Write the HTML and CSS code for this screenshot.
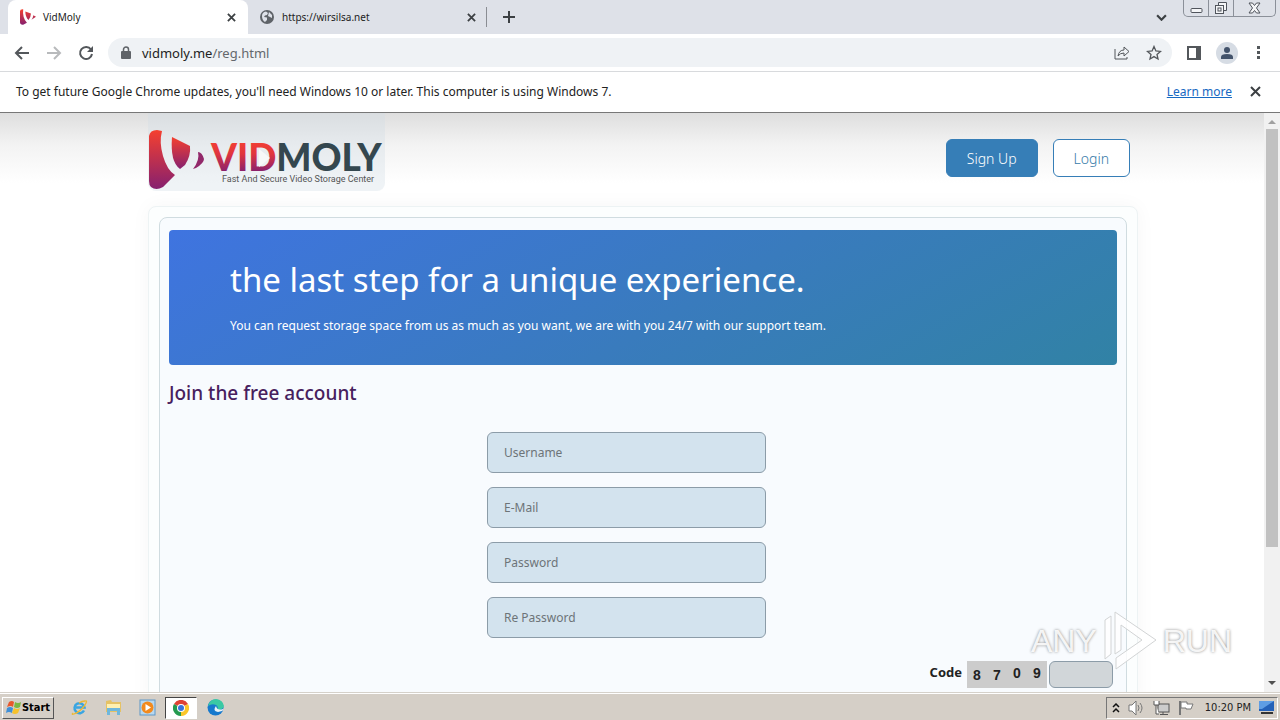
FILE: index.html
```html
<!DOCTYPE html>
<html lang="en">
<head>
  <meta charset="UTF-8" />
  <title>VidMoly</title>
  <meta name="viewport" content="width=device-width, initial-scale=1" />
  <link rel="stylesheet" href="styles.css">
</head>
<body>
  <!-- Tabs -->
  <div class="tab-strip">
    <div class="tab active">
      <svg class="favicon" viewBox="0 0 60 60">
        <defs>
          <linearGradient id="mark" x1="0" y1="0" x2="0" y2="1">
            <stop offset="0" stop-color="#f5402f" />
            <stop offset="1" stop-color="#86206f" />
          </linearGradient>
        </defs>
        <path fill="url(#mark)" d="M0 8Q0 0 12 1Q8 32 26 52L12 59Q0 60 0 50ZM20 9L41 17Q41 30 32 41Q20 30 20 9ZM50 23L60 29L43 40Q49 32 50 23Z" />
      </svg>
      <span class="tab-title">VidMoly</span>
      <button class="tab-close" aria-label="Close tab"><svg viewBox="0 0 10 10"><path d="M1 1L9 9M9 1L1 9" /></svg></button>
    </div>
    <div class="tab">
      <svg class="favicon" viewBox="0 0 16 16">
        <circle cx="8" cy="8" r="7" fill="#5f6368" />
        <path fill="#dee1e8" d="M3 7Q3 3 7 2.500L9 4L8 6L6 6.500L5 8L8 8.500L8 11L6 13Q3 11 3 7ZM10 3L13 6L13 9L11 8L9 7Z" />
      </svg>
      <span class="tab-title">https://wirsilsa.net</span>
      <button class="tab-close" aria-label="Close tab"><svg viewBox="0 0 10 10"><path d="M1 1L9 9M9 1L1 9" /></svg></button>
    </div>
    <button class="new-tab" aria-label="New tab"><svg viewBox="0 0 12 12"><path d="M6 0V12M0 6H12" /></svg></button>
    <button class="tab-search" aria-label="Search tabs"><svg viewBox="0 0 10 6"><path d="M1 1L5 5L9 1" /></svg></button>
    <div class="window-buttons">
      <button aria-label="Minimize"><svg width="13" height="12" viewBox="0 0 13 12"><rect x="1" y="6.500" width="11" height="4" rx="1" /></svg></button>
      <button aria-label="Restore"><svg width="14" height="14" viewBox="0 0 14 14"><path d="M4.500 4V1.500H12.500V9.500H10" /><rect x="1.500" y="4.500" width="8" height="8" /><rect x="4" y="7" width="3" height="3" /></svg></button>
      <button class="wide" aria-label="Close"><svg width="13" height="12" viewBox="0 0 13 12"><path d="M1 1H4.500L6.500 3.500L8.500 1H12L8.500 6L12 11H8.500L6.500 8.500L4.500 11H1L4.500 6Z" /></svg></button>
    </div>
  </div>

  <!-- Toolbar -->
  <div class="toolbar">
    <button aria-label="Back"><svg width="16" height="16" viewBox="0 0 16 16"><path d="M15 8H2M8 2L2 8L8 14" /></svg></button>
    <button class="disabled" aria-label="Forward"><svg width="16" height="16" viewBox="0 0 16 16"><path d="M1 8H14M8 2L14 8L8 14" /></svg></button>
    <button aria-label="Reload"><svg width="16" height="16" viewBox="0 0 16 16"><path d="M13 4.500A6 6 0 1 0 14 9" /><path class="solid" d="M15 1V7H9Z" /></svg></button>
    <div class="address-bar">
      <svg class="lock" width="10" height="13" viewBox="0 0 10 13"><rect x="0" y="5" width="10" height="8" rx="1" fill="#5f6368" /><path d="M2.500 6V3.500A2.500 2.500 0 0 1 7.500 3.500V6" fill="none" stroke="#5f6368" stroke-width="1.500" /></svg>
      <span class="url">vidmoly.me<span>/reg.html</span></span>
      <button aria-label="Share"><svg class="thin" width="16" height="16" viewBox="0 0 16 16"><path d="M1 4V14H13V12M4 11Q5 5 10 5V2L15 6.500L10 11V8Q6 8 4 11Z" /></svg></button>
      <button aria-label="Bookmark"><svg class="star" width="16" height="16" viewBox="0 0 16 16"><path d="M8 1.500L9.900 6L14.500 6.400L11 9.500L12 14L8 11.600L4 14L5 9.500L1.500 6.400L6.100 6Z" /></svg></button>
    </div>
    <button class="side" aria-label="Side panel"><svg width="14" height="14" viewBox="0 0 14 14"><rect x="1" y="1" width="12" height="12" /><path class="solid" d="M9 0H14V14H9Z" /></svg></button>
    <button class="avatar" aria-label="Profile"><svg width="22" height="22" viewBox="0 0 22 22"><circle cx="11" cy="11" r="11" fill="#d6dce4" /><circle cx="11" cy="8" r="3" fill="#43536b" /><path d="M5 17V15Q5 12 11 12Q17 12 17 15V17Z" fill="#43536b" /></svg></button>
    <button class="menu" aria-label="Menu"><svg width="4" height="14" viewBox="0 0 4 14"><path class="solid" d="M0 0H3V3H0ZM0 5H3V8H0ZM0 10H3V13H0Z" /></svg></button>
  </div>

  <!-- Info bar -->
  <div class="info-bar">
    <p>To get future Google Chrome updates, you'll need Windows 10 or later. This computer is using Windows 7.</p>
    <a href="#">Learn more</a>
    <button aria-label="Dismiss"><svg width="11" height="11" viewBox="0 0 11 11"><path d="M1 1L10 10M10 1L1 10" /></svg></button>
  </div>

  <!-- Page -->
  <div class="viewport">
    <div class="page">
      <div class="container">
        <header class="site-header">
          <a class="logo" href="#" aria-label="VidMoly">
            <svg width="237" height="78" viewBox="0 0 237 78">
              <defs>
                <linearGradient id="vid" gradientUnits="userSpaceOnUse" x1="0" y1="29" x2="0" y2="59">
                  <stop offset="0" stop-color="#f23f33" />
                  <stop offset="0.400" stop-color="#e0353f" />
                  <stop offset="1" stop-color="#86206f" />
                </linearGradient>
              </defs>
              <path fill="url(#mark)" d="M1 23Q2 17 9 17L14 18Q11 29 15 43Q19 57 27 62L15 74Q8 78 3 74Q1 72 1 68Z" />
              <path fill="url(#mark)" d="M24 24L42 33Q43 43 37 52L32 56Q22 49 24 24Z" />
              <path fill="#92286a" d="M50 39Q54 39 56 46Q56 50 48 55L45 56Q52 47 50 39Z" />
              <text class="logo-name" x="63" y="58"><tspan fill="url(#vid)">VID</tspan><tspan fill="#34474f">MOLY</tspan></text>
              <path d="M111 36L122 45L111 54Z" fill="#f7f8f8" />
              <text class="logo-tagline" x="74" y="69">Fast And Secure Video Storage Center</text>
            </svg>
          </a>
          <nav>
            <button class="btn btn-primary">Sign Up</button>
            <button class="btn btn-outline">Login</button>
          </nav>
        </header>

        <main class="panel">
          <div class="panel-inner">
            <section class="banner">
              <h1>the last step for a unique experience.</h1>
              <p>You can request storage space from us as much as you want, we are with you 24/7 with our support team.</p>
            </section>
            <h2>Join the free account</h2>
            <form>
              <div class="fields">
                <input type="text" placeholder="Username" aria-label="Username" />
                <input type="email" placeholder="E-Mail" aria-label="E-Mail" />
                <input type="password" placeholder="Password" aria-label="Password" />
                <input type="password" placeholder="Re Password" aria-label="Re Password" />
              </div>
              <div class="captcha">
                <label for="code">Code</label>
                <div class="digits"><span class="low">8</span><span class="low">7</span><span>0</span><span>9</span></div>
                <input type="text" id="code" />
              </div>
            </form>
          </div>
        </main>
      </div>
    </div>
    <div class="scrollbar">
      <svg width="8" height="4" viewBox="0 0 8 4"><path d="M0 4L4 0L8 4Z" fill="#a0a0a0" /></svg>
      <div class="thumb"></div>
      <svg width="8" height="4" viewBox="0 0 8 4"><path d="M0 0L4 4L8 0Z" fill="#505050" /></svg>
    </div>
    <div class="watermark">
      <span>ANY</span>
      <svg width="58" height="64" viewBox="0 0 58 64">
        <path d="M4 50V11L10 7V45ZM14 3L55 31L15 60V49L41 31L20 16V41L14 45Z" fill="#fff" fill-opacity="0.800" stroke="#d2d4d5" />
      </svg>
      <span>RUN</span>
    </div>
  </div>

  <!-- Taskbar -->
  <div class="taskbar">
    <button class="start">
      <svg width="16" height="16" viewBox="0 0 16 16"><path d="M3 2Q6 0 8 2L7 7Q5 5 1 7Z" fill="#e8582c" /><path d="M9 2Q12 4 15 2L14 7Q11 9 8 7Z" fill="#7ab842" /><path d="M1 8Q4 6 7 8L6 13Q3 11 0 13Z" fill="#3e8fd8" /><path d="M8 8Q11 10 14 8L12 13Q9 15 6 13Z" fill="#f6c22c" /></svg>
      Start
    </button>
    <button class="task" aria-label="Internet Explorer"><svg width="17" height="17" viewBox="0 0 17 17"><path d="M13 11.500A5 5 0 1 1 13.500 8.500H5" fill="none" stroke="#38a5e2" stroke-width="2.500" /><path d="M2 14Q0 16 3 15Q9 13 14 6Q17 1 14 2Q11 2 8 4" fill="none" stroke="#edb934" stroke-width="1.300" /></svg></button>
    <button class="task" aria-label="Explorer"><svg width="17" height="17" viewBox="0 0 17 17"><path d="M1 2L6 1L7 3H16V13H1Z" fill="#e5c265" /><path d="M2 5H15V9H2Z" fill="#fff0b0" /><path d="M2 16V9H15V16H12V12H5V16Z" fill="#6fb7dc" /></svg></button>
    <button class="task" aria-label="Media Player"><svg width="17" height="17" viewBox="0 0 17 17"><rect x="1" y="1" width="15" height="15" fill="#b8d8ef" stroke="#5e98c8" /><circle cx="8.500" cy="8.500" r="6" fill="#f28a1e" /><path d="M6.500 5L12 8.500L6.500 12Z" fill="#fff" /></svg></button>
    <button class="task current" aria-label="Chrome"><svg width="16" height="16" viewBox="0 0 16 16"><path d="M8 8L1 4A8 8 0 0 1 15 4Z" fill="#df4234" /><path d="M8 8L15 4A8 8 0 0 1 8 16Z" fill="#fbc629" /><path d="M8 8L8 16A8 8 0 0 1 1 4Z" fill="#249a50" /><circle cx="8" cy="8" r="4" fill="#fff" /><circle cx="8" cy="8" r="3" fill="#3973dc" /></svg></button>
    <button class="task" aria-label="Edge"><svg width="17" height="17" viewBox="0 0 17 17"><circle cx="8.500" cy="8.500" r="8" fill="#1679cd" /><path d="M1 7Q3 0 9 0Q16 1 17 7Q16 11 10 11Q12 8 9 6Q5 4 1 7Z" fill="#3ac9a4" /><path d="M9 7Q5 12 11 13L15 12Q17 11 16 10Q10 12 9 7Z" fill="#eaf4f8" /></svg></button>
    <div class="tray">
      <svg width="8" height="10" viewBox="0 0 8 10"><path d="M1 4L4 1L7 4M1 9L4 6L7 9" fill="none" stroke="#111" stroke-width="1.500" /></svg>
      <svg width="17" height="16" viewBox="0 0 17 16"><path d="M1 5H4L8 1V15L4 11H1Z" fill="#fff" stroke="#777" /><path d="M10 5Q12 8 10 11M12 3Q16 8 12 13" fill="none" stroke="#777" /></svg>
      <svg width="17" height="16" viewBox="0 0 17 16"><rect x="5" y="4" width="11" height="8" fill="#ccc" stroke="#555" /><path d="M7 14.500H15M10 12V14" stroke="#555" fill="none" /><path d="M1 1V5H6V1M3 5V14H6" fill="#fff" stroke="#555" /></svg>
      <svg width="17" height="16" viewBox="0 0 17 16"><path d="M2 1V15" stroke="#777" stroke-width="2" /><path d="M3 2H9V4H15L13 9H8V8H3Z" fill="#fff" stroke="#777" /></svg>
      <time>10:20 PM</time>
      <svg width="16" height="13" viewBox="0 0 16 13"><rect x="0" y="0" width="15" height="10" fill="#2461b8" /><path d="M0 0H15L3 8H0Z" fill="#5e9de4" /><path d="M2 12H14" stroke="#333" stroke-width="2" /></svg>
    </div>
  </div>
</body>
</html>
```

FILE: styles.css
```css
* {
  box-sizing: border-box;
}

body {
  display: flex;
  flex-direction: column;
  height: 100vh;
  margin: 0;
  overflow: hidden;
  font-family: "Noto Sans", sans-serif;
  font-size: 12px;
  color: #222;
  background: #fff;
}

button {
  display: flex;
  align-items: center;
  justify-content: center;
  padding: 0;
  border: none;
  background: none;
  font-family: inherit;
}

svg {
  display: block;
  flex: none;
}

/* tabs */
.tab-strip {
  display: flex;
  align-items: center;
  height: 34px;
  padding-left: 8px;
  background: #dee1e8;
}

.tab {
  display: flex;
  align-items: center;
  width: 239px;
  height: 34px;
  padding: 0 12px;
  font-size: 10px;
}

.tab.active {
  width: 240px;
  background: #fff;
  border-radius: 8px 8px 0 0;
}

.tab + .tab {
  border-right: 1px solid #8a8d93;
  height: 20px;
  padding-left: 11px;
  padding-right: 10px;
}

.favicon {
  width: 16px;
  height: 16px;
}

.tab-title {
  flex: 1;
  margin-left: 7px;
}

.tab-close svg {
  width: 9px;
  height: 9px;
}

.tab-close path,
.new-tab path,
.tab-search path,
.info-bar path {
  fill: none;
  stroke: #3c4043;
  stroke-width: 2;
}

.new-tab {
  margin-left: 16px;
}

.new-tab svg {
  width: 12px;
  height: 12px;
}

.tab-search {
  margin-left: auto;
  margin-right: 16px;
}

.tab-search svg {
  width: 11px;
  height: 7px;
}

.window-buttons {
  display: flex;
  align-self: flex-start;
  margin-right: 4px;
  border: 1px solid #8b9099;
  border-top: none;
  border-radius: 0 0 5px 5px;
}

.window-buttons button {
  width: 25px;
  height: 16px;
  border-right: 1px solid #8b9099;
}

.window-buttons .wide {
  width: 41px;
  border-right: none;
}

.window-buttons svg * {
  fill: #f4f5f7;
  stroke: #50545c;
}

/* toolbar */
.toolbar {
  display: flex;
  align-items: center;
  height: 38px;
  padding: 0 19px 0 14px;
  border-bottom: 1px solid #d8dadd;
}

.toolbar > button {
  margin-right: 16px;
}

.toolbar button path,
.toolbar button rect {
  fill: none;
  stroke: #53575b;
  stroke-width: 2;
}

.toolbar button .thin path,
.toolbar button .star path {
  stroke-width: 1;
}

.toolbar button .star path {
  stroke-width: 1.3;
}

.toolbar button .solid {
  fill: #53575b;
  stroke: none;
}

.toolbar .disabled path {
  stroke: #b8babc;
}

.address-bar {
  display: flex;
  flex: 1;
  align-items: center;
  gap: 16px;
  height: 29px;
  margin-right: 15px;
  margin-left: -2px;
  padding: 0 10px 0 13px;
  border-radius: 15px;
  background: #eff2f5;
}

.url {
  flex: 1;
  margin-left: -5px;
  font-size: 13px;
}

.url span {
  color: #64686c;
}

.toolbar .avatar {
  margin-left: -1px;
}

.toolbar .avatar path {
  fill: #43536b;
  stroke: none;
}

.toolbar .menu {
  margin: 0 0 0 3px;
}

/* chrome notice */
.info-bar {
  display: flex;
  align-items: center;
  height: 41px;
  padding: 0 19px 2px 16px;
  border-bottom: 1px solid #777;
}

.info-bar p {
  flex: 1;
  margin: 0;
}

.info-bar a {
  margin-right: 18px;
  color: #1769c2;
}

/* page */
.viewport {
  position: relative;
  display: flex;
  flex: 1;
  min-height: 0;
}

.page {
  flex: 1;
  overflow: hidden;
  padding-left: 22px;
  background: linear-gradient(#dedede, #f3f3f3 32px, #fff 70px);
}

.container {
  max-width: 990px;
  margin: 0 auto;
}

.site-header {
  display: flex;
  align-items: flex-start;
  justify-content: space-between;
  height: 93px;
  padding-right: 8px;
}

.logo {
  border-radius: 0 0 8px 8px;
  background: rgba(210, 222, 228, 0.35);
}

.logo-name {
  font-family: Lato, sans-serif;
  font-size: 37px;
  font-weight: 900;
}

.logo-tagline {
  font-family: Roboto, "Liberation Sans", sans-serif;
  font-size: 9px;
  fill: #555;
}

nav {
  display: flex;
  gap: 15px;
  margin-top: 26px;
}

.btn {
  height: 38px;
  padding: 0 20px;
  border: 1px solid #367eb7;
  border-radius: 6px;
  font-size: 14px;
  font-weight: 300;
}

.btn-primary {
  background: #367eb7;
  color: #fff;
}

.btn-outline {
  background: #fff;
  color: #367ba8;
}

.panel {
  padding: 10px;
  border: 1px solid #edf3f4;
  border-radius: 8px;
  background: #fcfefe;
  box-shadow: 0 0 20px rgba(0, 0, 0, 0.04);
}

.panel-inner {
  padding: 12px 9px;
  border: 1px solid #d0dce0;
  border-radius: 8px;
  background: #f8fbfe;
}

.banner {
  height: 135px;
  padding: 26px 61px;
  border-radius: 4px;
  background: linear-gradient(150deg, #3f74e0, #397bbd 55%, #3182a5);
  color: #fff;
}

.banner h1 {
  margin: 0 0 12px;
  font-size: 33px;
  font-weight: normal;
  line-height: 48px;
}

.banner p {
  margin: 0;
  font-size: 12px;
  line-height: 20px;
}

h2 {
  margin: 16px 0 26px;
  color: #47205d;
  font-size: 19px;
  font-weight: 500;
  line-height: 25px;
}

.fields {
  display: flex;
  flex-direction: column;
  gap: 14px;
  width: 279px;
  margin-left: 318px;
}

form input {
  border: 1px solid #8c9ca8;
  border-radius: 6px;
  background: #d3e3ee;
  font-family: inherit;
}

.fields input {
  height: 41px;
  padding: 0 16px;
  font-size: 12px;
}

.fields input::placeholder {
  color: #6d7478;
}

.captcha {
  display: flex;
  align-items: flex-start;
  justify-content: flex-end;
  margin: 23px 4px 0 0;
}

.captcha label {
  margin-right: 5px;
  font-size: 13px;
  font-weight: bold;
  line-height: 22px;
}

.captcha input {
  width: 64px;
  height: 27px;
  margin-left: 2px;
  background: #d1d6d9;
}

.digits {
  display: flex;
  justify-content: space-around;
  width: 80px;
  height: 27px;
  background: #ccc;
  font-family: "Liberation Sans", sans-serif;
  font-size: 14px;
  font-weight: bold;
  line-height: 24px;
}

.digits .low {
  padding-top: 2px;
}

.scrollbar {
  display: flex;
  flex-direction: column;
  align-items: center;
  width: 16px;
  padding: 7px 0;
  background: #f1f1f1;
}

.thumb {
  width: 12px;
  height: 74%;
  margin: 5px 0 auto;
  background: #c1c1c1;
}

.watermark {
  position: absolute;
  right: 48px;
  bottom: 19px;
  display: flex;
  align-items: center;
  gap: 4px;
  color: rgba(255, 255, 255, 0.9);
  font-family: "Liberation Sans", sans-serif;
  font-size: 32px;
  text-shadow: 0 0 3px #888;
}

/* taskbar */
.taskbar {
  display: flex;
  align-items: center;
  height: 28px;
  padding: 2px 2px 0;
  border-top: 1px solid #d5d1ca;
  background: #d5cfc7;
  box-shadow: inset 0 1px #fff;
  font-family: "DejaVu Sans Condensed", "DejaVu Sans", sans-serif;
}

.start {
  width: 52px;
  height: 22px;
  margin-right: 9px;
  border: 1px solid;
  border-color: #fff #555 #555 #fff;
  font-size: 11px;
  font-weight: bold;
}

.task {
  width: 32px;
  height: 22px;
  margin-right: 2px;
}

.task.current {
  border: 1px solid;
  border-color: #444 #fff #fff #444;
  background: #fff;
}

.tray {
  display: flex;
  align-items: center;
  gap: 8px;
  height: 22px;
  margin-left: auto;
  padding: 0 2px 0 5px;
  border: 1px solid;
  border-color: #777 #fff #fff #777;
  font-size: 11px;
}

.tray time {
  margin-left: 2px;
}
```
